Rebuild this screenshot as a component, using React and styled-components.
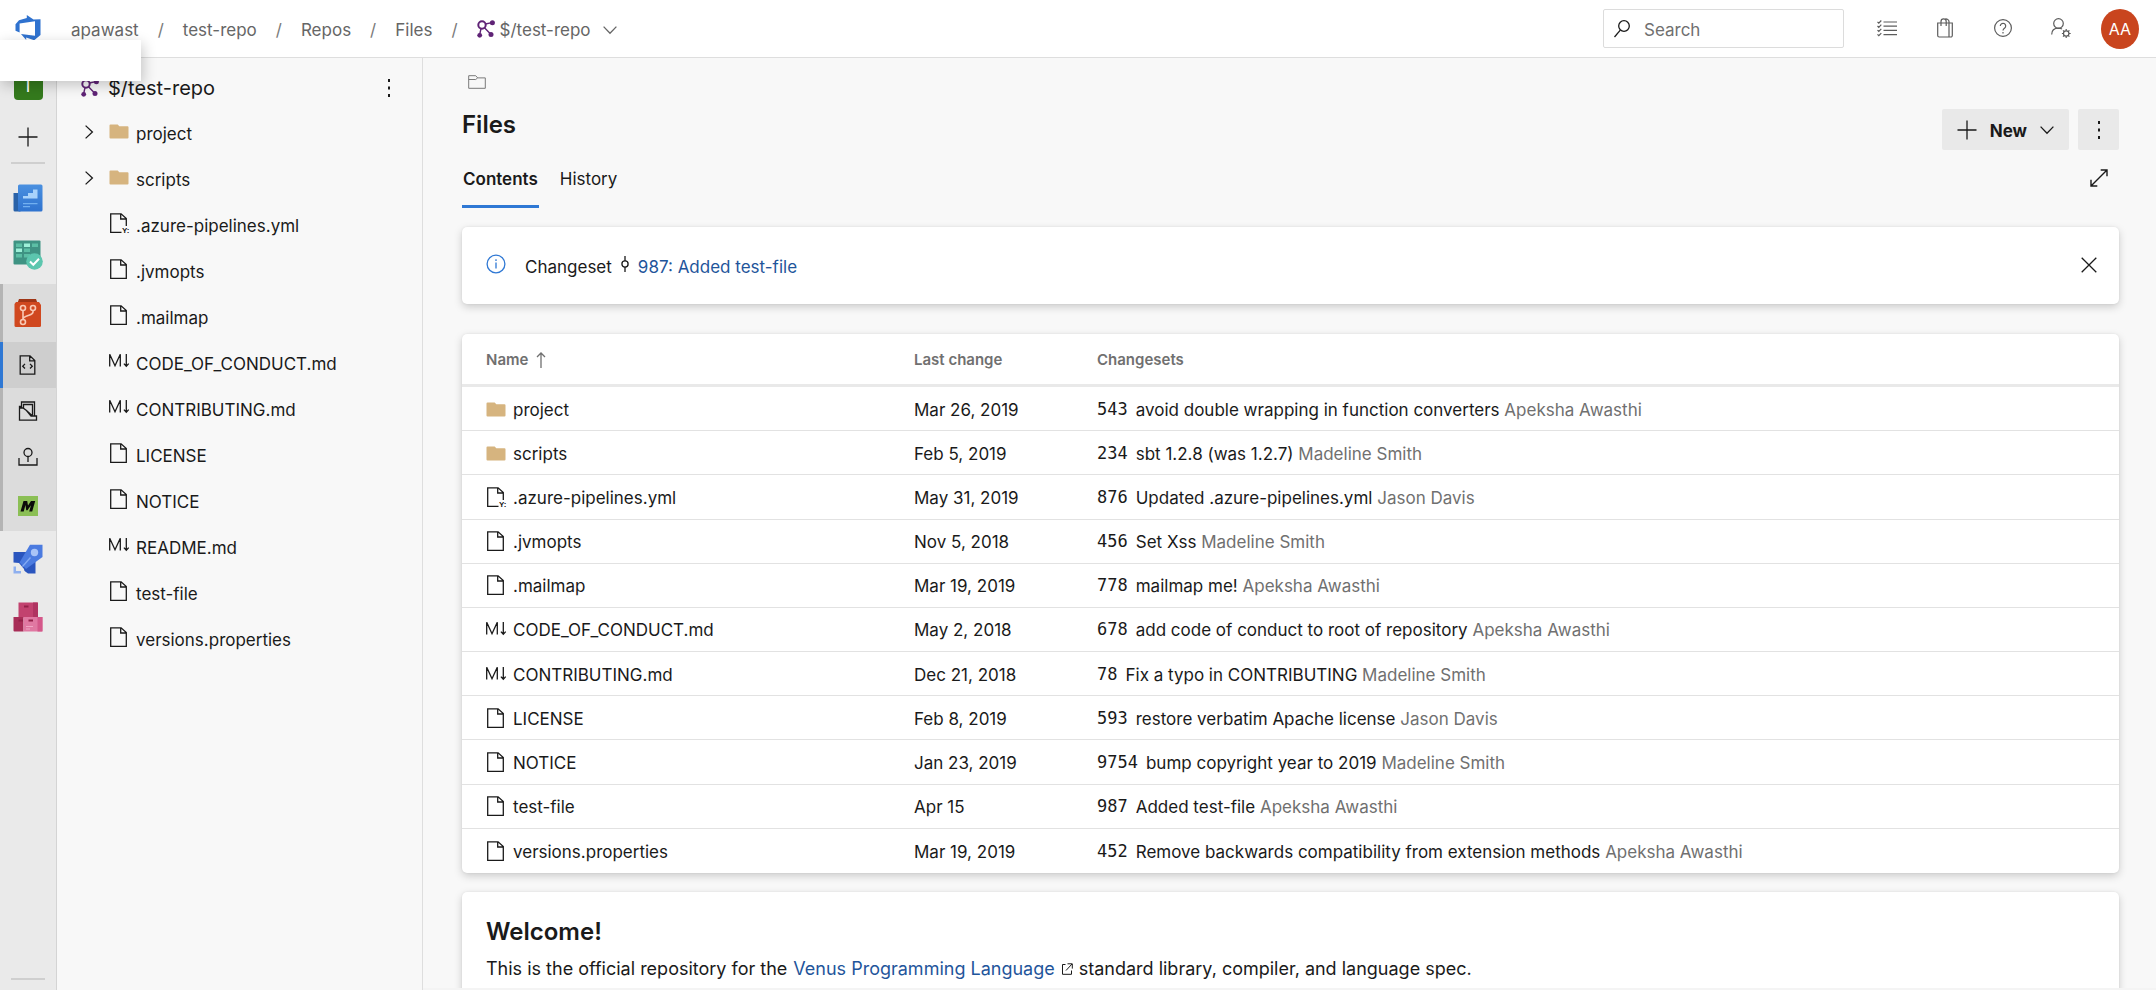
import React from "react";
import styled, { createGlobalStyle, css } from "styled-components";

const Global = createGlobalStyle`
  *, *::before, *::after { box-sizing: border-box; }
  body {
    margin: 0;
    font-family: Inter, "Liberation Sans", sans-serif;
    font-size: 17px;
    line-height: 24px;
    color: #1a1a1a;
    background: #f8f8f8;
  }
  button { font: inherit; color: inherit; border: 0; padding: 0; margin: 0; background: none; cursor: pointer; }
  ul, ol { list-style: none; margin: 0; padding: 0; }
  a { color: inherit; text-decoration: none; }
  h1, h2, p { margin: 0; }
`;

/* ---------- icons ---------- */

const Svg = styled.svg`
  display: block;
  flex: none;
  overflow: visible;
  fill: none;
  stroke: currentColor;
  stroke-width: ${(p) => p.$weight || 1.3};
`;

const Icon = ({ w = 20, h = 20, box, weight, children }) => (
  <Svg width={w} height={h} viewBox={box || `0 0 ${w} ${h}`} $weight={weight} aria-hidden="true">
    {children}
  </Svg>
);

const DevOpsLogo = () => (
  <Icon w={28} h={28}>
    <path
      d="M1.5 9.3 5 5.2 12.8 2.9V0l6.7 4.5L26.5 4.2V20l-6.3 5.2-8-2.6V25L7 19l14 1.8V6.2L5.6 8.6v9L1.5 15.8z"
      fill="#2f72cf"
      stroke="none"
    />
  </Icon>
);

const RepoMark = () => (
  <Icon w={18} h={18} weight={2}>
    <g stroke="#5f2376">
      <circle cx="5" cy="5" r="3.7" />
      <path d="M8.4 4 15 2.6M7.5 7.8 14 14.5M4 8.6 2.6 15" strokeWidth="1.4" />
    </g>
    <g fill="#5f2376" stroke="none">
      <circle cx="15.4" cy="2.8" r="2.5" />
      <circle cx="2.7" cy="15.3" r="2.4" />
      <circle cx="14" cy="14.5" r="2.5" />
    </g>
  </Icon>
);

const ChevronDown = () => (
  <Icon w={14} h={8}><path d="m.6.6 6.4 6.6L13.4.6" /></Icon>
);
const ChevronRight = () => (
  <Icon w={8} h={14}><path d="M.6.6 7.4 7 .6 13.4" /></Icon>
);
const Plus = () => (
  <Icon><path d="M10 .5v19M.5 10h19" /></Icon>
);
const Dots = () => (
  <Icon w={4} h={18}>
    <g fill="currentColor" stroke="none">
      <rect x="1" y="0" width="2" height="3" /><rect x="1" y="7.5" width="2" height="3" /><rect x="1" y="15" width="2" height="3" />
    </g>
  </Icon>
);
const Search = () => (
  <Icon w={16} h={18}><circle cx="10" cy="6" r="5.3" /><path d="M6.3 10.2.5 17" /></Icon>
);
const Folder = () => (
  <Icon>
    <path d="M.5 4.5a1 1 0 0 1 1-1h7.2l1.6 1.7h8.2a1 1 0 0 1 1 1v10.3a1 1 0 0 1-1 1h-17a1 1 0 0 1-1-1z" fill="#d6b47f" stroke="none" />
  </Icon>
);
const FolderOutline = () => (
  <Icon w={18} h={14} weight={1}>
    <path d="M.7 13.3V.7h7l2 2.2h7.6v10.4zM.7 4.5h7l2-1.600" />
  </Icon>
);
const FileShape = () => (
  <Icon><path d="M1.7.8h10.4l5.2 4.8v13.7H1.7zM11.7.8v5.2h5.6" /></Icon>
);
const YmlTag = styled.tspan`
  font: 700 8px/1 "Liberation Sans", sans-serif;
`;
const YmlFile = () => (
  <Icon>
    <path d="M12.500 19.3H1.7V.8h10.4l5.2 4.8V13M11.7.8v5.2h5.6" />
    <text x="13" y="20" fill="currentColor" stroke="none"><YmlTag>Y:</YmlTag></text>
  </Icon>
);
const Markdown = () => (
  <Icon>
    <path d="M.7 15.500V3.200l5.300 11.500L11.300 3.200V15.500M17.300 3v12.300m-2.400-2.700 2.400 2.700 2.400-2.700" />
  </Icon>
);
const InfoCircle = () => (
  <Icon><circle cx="10" cy="10" r="8.900" /><path d="M10 8.600v5.800M10 5.300v1.600" /></Icon>
);
const Commit = () => (
  <Icon w={10} h={16}><circle cx="5" cy="8" r="3.100" /><path d="M5 0v4.900M5 11.100V16" /></Icon>
);
const Close = () => (
  <Icon w={16} h={16}><path d="m.7.7 14.600 14.600M15.300.7.7 15.300" /></Icon>
);
const Expand = () => (
  <Icon w={18} h={18} weight={1.4}><path d="M1 17 17 1M10.700 1H17v6.300M1 10.700V17h6.300" /></Icon>
);
const ArrowUp = () => (
  <Icon w={10} h={16}><path d="M5 16V1M1 5l4-4 4 4" /></Icon>
);
const External = () => (
  <Icon w={12} h={12} weight={1}><path d="M4.500 1.500h-3v9.800h9V7.500M6.500.8h4.800v4.800M11 1 5 7.500" /></Icon>
);
const TaskList = () => (
  <Icon w={20} h={16} weight={1.2}>
    <path d="M6.500 2H20M6.500 6.200H20M6.500 10.400H20M6.500 14.600H20" />
    <path d="m.5 1.800 1.300 1.300L4.300.5M.5 6l1.300 1.300 2.500-2.600M.5 10.200l1.300 1.300 2.500-2.600M.5 14.400l1.300 1.300 2.500-2.600" />
  </Icon>
);
const Bag = () => (
  <Icon w={16} h={20} weight={1.2}>
    <path d="M.7 5h14.600v12.500a1.500 1.500 0 0 1-1.500 1.500H2.200A1.500 1.500 0 0 1 .7 17.500zM12 5v14M4 8V3.500a2.600 2.600 0 0 1 5.200 0V8M7.300 1.500c2-1.500 4.700 0 4.700 2V5" />
  </Icon>
);
const Help = () => (
  <Icon w={18} h={18} weight={1.2}>
    <circle cx="9" cy="9" r="8.400" />
    <path d="M6.300 7a2.700 2.700 0 1 1 4.400 2.100C9.500 10 9 10.400 9 11.600M9 13v1.400" />
  </Icon>
);
const UserGear = () => (
  <Icon w={20} h={20} weight={1.2}>
    <circle cx="7.500" cy="5.500" r="4.800" />
    <path d="M.7 16.500c0-4.200 3-6.300 6.800-6.300 1.400 0 2.500.3 3.500.8" />
    <circle cx="15.200" cy="15.500" r="2.700" />
    <path d="M15.200 11v1.800M15.200 18.200V20M10.900 15.500h1.600M17.900 15.500h1.800M12 12.300l1.300 1.300M17.100 17.400l1.300 1.300M12 18.700l1.300-1.300M17.100 13.600l1.300-1.300" />
  </Icon>
);

const OverviewIcon = () => (
  <Icon w={30} h={28}>
    <defs>
      <linearGradient id="ov" x1="0" y1="0" x2="0" y2="1"><stop offset="0" stopColor="#4a90e0" /><stop offset="1" stopColor="#2f73cf" /></linearGradient>
    </defs>
    <g stroke="none">
      <path d="M.5 9h7v18.500H2A1.500 1.500 0 0 1 .5 26z" fill="#2a62a8" />
      <rect x="5" y=".5" width="24.500" height="27" rx="1.500" fill="url(#ov)" />
      <path d="M10 14.500V12h5V9h5V5.500h4.500v9z" fill="#a9d3fb" />
      <path d="M10 19h14.500v1.300H10zM10 22h7v1.300h-7z" fill="#72b0f0" />
    </g>
  </Icon>
);
const BoardsIcon = () => (
  <Icon w={30} h={30}>
    <g stroke="none">
      <rect x=".5" y=".5" width="27" height="24" rx="1" fill="#3f9383" />
      <path d="M3 3.500h6v3.500H3zM19 3.500h6v3.500h-6zM11 8.500h6V12h-6zM3 14h6v3.500H3zM11 14h6v3.500h-6z" fill="#5cbfa5" />
      <path d="M11 3.500h6v3.500h-6zM3 8.500h6V12H3z" fill="#9df0d8" />
      <circle cx="21.500" cy="21.500" r="8.300" fill="#5cc6ae" />
    </g>
    <path d="m17 21.500 3.300 3.300 5.700-6" stroke="#fff" strokeWidth="2" />
  </Icon>
);
const ReposIcon = () => (
  <Icon w={28} h={30}>
    <g stroke="none">
      <path d="M5 1h17l1.500 4H3.500z" fill="#9f3516" />
      <path d="M2 4h23l2 3v20.500a1.500 1.500 0 0 1-1.500 1.500H2A1.500 1.500 0 0 1 .5 27.500V6z" fill="#d0481f" />
    </g>
    <g stroke="#f8c9b4" strokeWidth="1.600">
      <circle cx="9" cy="10" r="2.500" /><circle cx="19" cy="10" r="2.500" /><circle cx="9" cy="24" r="2.500" />
      <path d="M9 12.500v9M19 12.500v1.500c0 2-1.500 2.500-4 3.300-3 1-6 1.700-6 4.200" />
    </g>
  </Icon>
);
const CodeFile = () => (
  <Icon><path d="M2.200.8h9.800l4.800 4.700v13.700H2.200zM11.700.8v5h5.100M7 8.900 4.700 11.200 7 13.500M12 8.900l2.300 2.300-2.300 2.300" /></Icon>
);
const CommitFolder = () => (
  <Icon>
    <path d="M3 5.500H1.500v13.700h17v-4.200H13L8.500 9.500 5 7H1.500M3.500 7V1h13v13.500M5.500 7V3.500h9v10l-1 1M9 10l5 4.500" />
  </Icon>
);
const TagIcon = () => (
  <Icon h={18}><circle cx="10" cy="4.500" r="4" /><path d="M10 8.500V14M1 10v7h18v-7" /></Icon>
);
const MLogo = () => (
  <Icon>
    <rect width="20" height="20" fill="#8bbf55" stroke="none" />
    <path d="M2.500 15.500 5.500 5h3.700l.8 4.500L13 5h4.200l-3 10.500h-3l1.800-6.300-3.500 5H8.200L7.500 9l-1.800 6.500z" fill="#0a0a0a" stroke="none" />
  </Icon>
);
const Pipelines = () => (
  <Icon w={30} h={30}>
    <g stroke="none">
      <path d="M.5 8h15l7 8v13.500H15L.5 19z" fill="#2a55be" />
      <path d="M17 .7h12.500V13L13 25l-6.500-6.500z" fill="#4b7be0" />
      <circle cx="21.500" cy="8.500" r="3.700" fill="#a9c4f7" />
      <path d="m9 22 8-9 1 1-8 9z" fill="#85aaf2" />
      <path d="M0 18.500l6 .5 5 6 1 5H7L0 24z" fill="#eaeaea" />
      <path d="M.5 22.500H3v4.500h5v2.500H.5z" fill="#8fb0ef" />
    </g>
  </Icon>
);
const Artifacts = () => (
  <Icon w={30} h={30}>
    <g stroke="none">
      <path d="M5.500.5h19v15h-19z" fill="#c2426f" /><path d="M20 .5h5v15h-5z" fill="#b03461" />
      <path d="M.5 15h10v14.500H1.500a1 1 0 0 1-1-1z" fill="#a82d57" />
      <path d="M10.500 15h19v13.500a1 1 0 0 1-1 1h-18z" fill="#e078a2" /><path d="M24.500 15h5v14.500h-5z" fill="#d4588a" />
      <path d="M11 3.500h4.500v2H11zM5.500 17.500H10v2H5.500zM15.500 17.500H20v2h-4.500z" fill="#932048" />
      <path d="M13 24h7v1h-7zM13 26.500h4v1h-4z" fill="#f0a5c4" />
    </g>
  </Icon>
);

/* ---------- top bar ---------- */

const Shell = styled.div`
  display: flex;
  flex-direction: column;
  height: 100vh;
  overflow: hidden;
`;
const TopBar = styled.header`
  display: flex;
  align-items: center;
  flex: none;
  height: 58px;
  padding: 0 17px 0 14px;
  background: #fff;
  border-bottom: 1px solid #dedede;
`;
const Crumbs = styled.ol`
  display: flex;
  align-items: center;
  flex: 1;
  margin-left: 29px;
  padding-top: 2px;
  color: #666;
`;
const Crumb = styled.li`
  display: flex;
  align-items: center;
  &:not(:last-child)::after { content: "/"; margin: 0 19px; color: #7a7a7a; }
`;
const CrumbLink = styled.a`
  display: flex;
  align-items: center;
  gap: 5px;
  svg { margin-bottom: 2px; }
`;
const CrumbToggle = styled.button`
  display: flex;
  padding: 4px;
  margin-left: 8px;
`;
const SearchBox = styled.label`
  display: flex;
  align-items: center;
  gap: 14px;
  width: 241px;
  height: 39px;
  padding: 0 10px;
  border: 1px solid #dcdcdc;
  border-radius: 2px;
`;
const SearchInput = styled.input`
  flex: 1;
  min-width: 0;
  padding: 2px 0 0;
  border: 0;
  outline: 0;
  background: none;
  font: inherit;
  &::placeholder { color: #707070; opacity: 1; }
`;
const TopActions = styled.div`
  display: flex;
  align-items: center;
  margin-left: 14px;
`;
const TopAction = styled.button`
  display: grid;
  place-items: center;
  width: 58px;
  height: 40px;
  padding-bottom: 2px;
  color: #5c5c5c;
`;
const Avatar = styled.button`
  width: 38px;
  height: 40px;
  margin-left: 11px;
  border-radius: 50%;
  background: #c9451e;
  color: #fff;
  font-size: 16px;
`;
const BlankTip = styled.div`
  position: absolute;
  left: 0;
  top: 40px;
  z-index: 2;
  width: 141px;
  height: 41px;
  background: #fff;
  box-shadow: 2px 4px 14px rgba(0, 0, 0, 0.22);
`;

/* ---------- rail ---------- */

const Body = styled.div`
  display: flex;
  flex: 1;
  min-height: 0;
`;
const Rail = styled.nav`
  display: flex;
  flex-direction: column;
  align-items: center;
  flex: none;
  width: 57px;
  padding: 13px 0 10px;
  background: #eaeaea;
  border-right: 1px solid #d4d4d4;
`;
const ProjectTile = styled.a`
  display: grid;
  place-items: center;
  width: 29px;
  height: 29px;
  border-radius: 4px;
  background: #347a1d;
  color: #fff;
`;
const RailLink = styled.a`
  position: relative;
  display: grid;
  place-items: center;
  width: 100%;
  height: ${(p) => p.$h || 46}px;
  ${(p) => p.$active && css`
    background: #cecece;
    &::before { content: ""; position: absolute; inset: 0 auto 0 0; width: 3px; background: #2f78d4; }
  `}
`;
const RailAdd = styled.button`
  display: grid;
  place-items: center;
  width: 100%;
  height: 62px;
  padding-top: 11px;
`;
const RailRule = styled.hr`
  width: 34px;
  height: 2px;
  margin: 0;
  margin-top: ${(p) => (p.$end ? "auto" : 0)};
  border: 0;
  background: #cfcfcf;
`;
const RailSection = styled.div`
  width: 100%;
  padding: 6px 0 1px;
`;
const RailGroup = styled.div`
  width: 100%;
  background: #dcdcdc;
  box-shadow: inset 3px 0 #b4b4b4;
`;

/* ---------- tree ---------- */

const Tree = styled.aside`
  flex: none;
  width: 366px;
  border-right: 1px solid #dedede;
`;
const TreeHead = styled.div`
  display: flex;
  align-items: center;
  gap: 9px;
  height: 52px;
  padding: 8px 31px 0 24px;
  font-size: 20px;
`;
const TreeTitle = styled.h2`
  flex: 1;
  font: inherit;
`;
const MoreButton = styled.button`
  display: grid;
  place-items: center;
  ${(p) => p.$filled && css`
    width: 41px;
    height: 41px;
    border-radius: 2px;
    background: #e9e9e9;
  `}
`;
const TreeRow = styled.li`
  display: flex;
  align-items: center;
  height: 46px;
  padding: 2px 0 0 28px;
`;
const Twisty = styled.button`
  display: flex;
  width: 24px;
  padding-bottom: 4px;
`;
const TwistyGap = styled.span`
  width: 24px;
`;
const FileLink = styled.a`
  display: flex;
  align-items: center;
  gap: 7px;
  svg { margin-bottom: ${(p) => (p.$raised ? 6 : 2)}px; }
`;

/* ---------- content ---------- */

const Main = styled.main`
  flex: 1;
  min-width: 0;
  overflow: hidden;
  padding: 17px 37px 0 39px;
  border-bottom: 2px solid #f4f4f4;
`;
const PathRow = styled.div`
  padding-left: 6px;
  color: #7a7a7a;
`;
const TitleRow = styled.div`
  display: flex;
  align-items: center;
  justify-content: space-between;
  height: 41px;
  margin-top: 20px;
`;
const Title = styled.h1`
  font-size: 24px;
  line-height: 32px;
  font-weight: 600;
  padding-bottom: 10px;
`;
const Actions = styled.div`
  display: flex;
  gap: 9px;
`;
const NewButton = styled.button`
  display: flex;
  align-items: center;
  gap: 13px;
  height: 41px;
  padding: 0 15px;
  border-radius: 2px;
  background: #e9e9e9;
  font-weight: 700;
`;
const NewLabel = styled.span`
  padding-top: 2px;
`;
const TabRow = styled.div`
  display: flex;
  align-items: center;
  justify-content: space-between;
  height: 58px;
  padding-right: 11px;
`;
const ExpandButton = styled.button`
  padding-bottom: 2px;
`;
const Tabs = styled.div`
  display: flex;
  gap: 20px;
  height: 58px;
`;
const Tab = styled.button`
  padding: 3px 1px 0;
  border-bottom: 3px solid ${(p) => (p.$on ? "#2f78d4" : "transparent")};
  font-weight: ${(p) => (p.$on ? 600 : 400)};
`;
const Card = styled.section`
  background: #fff;
  border-radius: 5px;
  box-shadow: 0 3px 8px rgba(0, 0, 0, 0.18), 0 0 2px rgba(0, 0, 0, 0.08);
`;
const Notice = styled(Card)`
  display: flex;
  align-items: center;
  height: 77px;
  margin-top: 19px;
  padding: 0 22px 0 24px;
`;
const NoticeIcon = styled.span`
  padding-bottom: 4px;
  margin-right: 19px;
  color: #2f78d4;
`;
const NoticeText = styled.p`
  display: flex;
  align-items: center;
  flex: 1;
  gap: 8px;
  padding-top: 2px;
  svg { margin-bottom: 6px; }
`;
const DismissButton = styled.button`
  padding-bottom: 2px;
`;
const BlueLink = styled.a`
  color: #1f559b;
`;
const TableCard = styled(Card)`
  margin-top: 30px;
`;
const Table = styled.table`
  width: 100%;
  height: 539px;
  table-layout: fixed;
  border-collapse: separate;
  border-spacing: 0;
`;
const Col = styled.col`
  width: ${(p) => (p.$w ? `${p.$w}px` : "auto")};
`;
const Th = styled.th`
  height: 53px;
  padding: 2px 0 0 ${(p) => (p.$first ? 24 : 0)}px;
  border-bottom: 3px solid #e9e9e9;
  text-align: left;
  font-size: 15px;
  font-weight: 600;
  color: #707070;
`;
const SortLabel = styled.span`
  display: flex;
  align-items: center;
  gap: 8px;
`;
const Td = styled.td`
  height: 44px;
  padding: 2px 0 0 ${(p) => (p.$first ? 24 : 0)}px;
  border-bottom: 1px solid #e2e2e2;
  white-space: nowrap;
  tr:last-child & { border-bottom: 0; }
`;
const ChangeId = styled.span`
  margin-right: 8px;
  font-family: "DejaVu Sans Mono", monospace;
  line-height: 16px;
  vertical-align: 1px;
`;
const Author = styled.span`
  color: #707070;
`;
const Readme = styled(Card)`
  margin-top: 19px;
  padding: 24px;
  font-size: 18px;
`;
const ReadmeTitle = styled.h2`
  font-size: 24px;
  line-height: 32px;
  font-weight: 600;
`;
const ReadmeText = styled.p`
  display: flex;
  align-items: center;
  gap: 6px;
  margin-top: 9px;
  white-space: nowrap;
`;

const kindIcon = { folder: Folder, file: FileShape, yml: YmlFile, md: Markdown };

const files = [
  ["folder", "project", "Mar 26, 2019", "543", "avoid double wrapping in function converters", "Apeksha Awasthi"],
  ["folder", "scripts", "Feb 5, 2019", "234", "sbt 1.2.8 (was 1.2.7)", "Madeline Smith"],
  ["yml", ".azure-pipelines.yml", "May 31, 2019", "876", "Updated .azure-pipelines.yml", "Jason Davis"],
  ["file", ".jvmopts", "Nov 5, 2018", "456", "Set Xss", "Madeline Smith"],
  ["file", ".mailmap", "Mar 19, 2019", "778", "mailmap me!", "Apeksha Awasthi"],
  ["md", "CODE_OF_CONDUCT.md", "May 2, 2018", "678", "add code of conduct to root of repository", "Apeksha Awasthi"],
  ["md", "CONTRIBUTING.md", "Dec 21, 2018", "78", "Fix a typo in CONTRIBUTING", "Madeline Smith"],
  ["file", "LICENSE", "Feb 8, 2019", "593", "restore verbatim Apache license", "Jason Davis"],
  ["file", "NOTICE", "Jan 23, 2019", "9754", "bump copyright year to 2019", "Madeline Smith"],
  ["file", "test-file", "Apr 15", "987", "Added test-file", "Apeksha Awasthi"],
  ["file", "versions.properties", "Mar 19, 2019", "452", "Remove backwards compatibility from extension methods", "Apeksha Awasthi"],
];
const treeFiles = [...files.slice(0, 9), ["md", "README.md"], ...files.slice(9)];

const FileName = ({ kind, name, raised }) => {
  const Kind = kindIcon[kind];
  return (
    <FileLink href="#" $raised={raised}><Kind />{name}</FileLink>
  );
};

export default function App() {
  return (
    <Shell>
      <Global />
      <TopBar>
        <a href="#" aria-label="Azure DevOps"><DevOpsLogo /></a>
        <Crumbs>
          {["apawast", "test-repo", "Repos", "Files"].map((c) => (
            <Crumb key={c}><CrumbLink href="#">{c}</CrumbLink></Crumb>
          ))}
          <Crumb>
            <CrumbLink href="#"><RepoMark />$/test-repo</CrumbLink>
            <CrumbToggle aria-label="Switch repository"><ChevronDown /></CrumbToggle>
          </Crumb>
        </Crumbs>
        <SearchBox>
          <Search />
          <SearchInput type="text" placeholder="Search" aria-label="Search" />
        </SearchBox>
        <TopActions>
          <TopAction aria-label="Work items"><TaskList /></TopAction>
          <TopAction aria-label="Marketplace"><Bag /></TopAction>
          <TopAction aria-label="Help"><Help /></TopAction>
          <TopAction aria-label="User settings"><UserGear /></TopAction>
          <Avatar>AA</Avatar>
        </TopActions>
      </TopBar>
      <BlankTip />
      <Body>
        <Rail aria-label="Project">
          <ProjectTile href="#">T</ProjectTile>
          <RailAdd aria-label="Add"><Plus /></RailAdd>
          <RailRule />
          <RailSection>
            <RailLink href="#" $h={56} aria-label="Overview"><OverviewIcon /></RailLink>
            <RailLink href="#" $h={57} aria-label="Boards"><BoardsIcon /></RailLink>
          </RailSection>
          <RailGroup>
            <RailLink href="#" $h={58} aria-label="Repos"><ReposIcon /></RailLink>
            <RailLink href="#" $active aria-label="Files"><CodeFile /></RailLink>
            <RailLink href="#" aria-label="Changesets"><CommitFolder /></RailLink>
            <RailLink href="#" aria-label="Shelvesets"><TagIcon /></RailLink>
            <RailLink href="#" $h={51} aria-label="Extension"><MLogo /></RailLink>
          </RailGroup>
          <RailLink href="#" $h={56} aria-label="Pipelines"><Pipelines /></RailLink>
          <RailLink href="#" $h={60} aria-label="Artifacts"><Artifacts /></RailLink>
          <RailRule $end />
        </Rail>
        <Tree>
          <TreeHead>
            <RepoMark />
            <TreeTitle>$/test-repo</TreeTitle>
            <MoreButton aria-label="More options"><Dots /></MoreButton>
          </TreeHead>
          <ul>
            {treeFiles.map(([kind, name]) => (
              <TreeRow key={name}>
                {kind === "folder" ? <Twisty aria-label={`Expand ${name}`}><ChevronRight /></Twisty> : <TwistyGap />}
                <FileName kind={kind} name={name} raised />
              </TreeRow>
            ))}
          </ul>
        </Tree>
        <Main>
          <PathRow><FolderOutline /></PathRow>
          <TitleRow>
            <Title>Files</Title>
            <Actions>
              <NewButton><Plus /><NewLabel>New</NewLabel><ChevronDown /></NewButton>
              <MoreButton $filled aria-label="More actions"><Dots /></MoreButton>
            </Actions>
          </TitleRow>
          <TabRow>
            <Tabs role="tablist">
              <Tab role="tab" aria-selected="true" $on>Contents</Tab>
              <Tab role="tab" aria-selected="false">History</Tab>
            </Tabs>
            <ExpandButton aria-label="Full screen"><Expand /></ExpandButton>
          </TabRow>
          <Notice>
            <NoticeIcon><InfoCircle /></NoticeIcon>
            <NoticeText>Changeset <Commit /> <BlueLink href="#">987: Added test-file</BlueLink></NoticeText>
            <DismissButton aria-label="Dismiss"><Close /></DismissButton>
          </Notice>
          <TableCard>
            <Table>
              <colgroup><Col $w={452} /><Col $w={183} /><Col /></colgroup>
              <thead>
                <tr>
                  <Th $first><SortLabel>Name <ArrowUp /></SortLabel></Th>
                  <Th>Last change</Th>
                  <Th>Changesets</Th>
                </tr>
              </thead>
              <tbody>
                {files.map(([kind, name, date, id, message, author]) => (
                  <tr key={name}>
                    <Td $first><FileName kind={kind} name={name} /></Td>
                    <Td>{date}</Td>
                    <Td><ChangeId>{id}</ChangeId>{message} <Author>{author}</Author></Td>
                  </tr>
                ))}
              </tbody>
            </Table>
          </TableCard>
          <Readme>
            <ReadmeTitle>Welcome!</ReadmeTitle>
            <ReadmeText>
              <span>This is the official repository for the</span>
              <BlueLink href="#">Venus Programming Language</BlueLink>
              <External />
              <span>standard library, compiler, and language spec.</span>
            </ReadmeText>
          </Readme>
        </Main>
      </Body>
    </Shell>
  );
}
